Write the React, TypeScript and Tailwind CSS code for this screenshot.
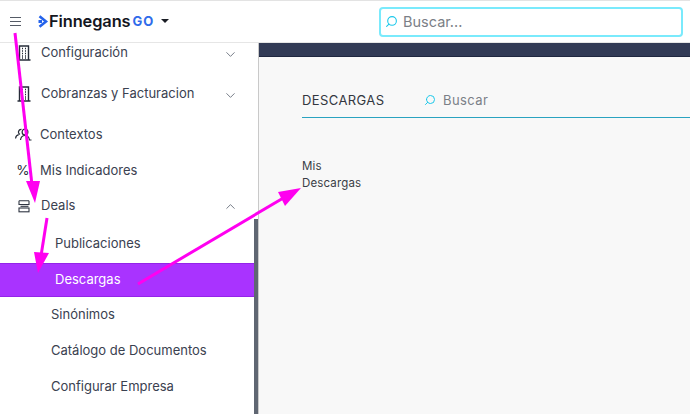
import { ChevronDown, ChevronUp, Search } from "lucide-react";

const font = { fontFamily: "Inter, 'Open Sans', sans-serif" };

function Building() {
  return (
    <svg width="14" height="16" viewBox="0 0 14 16" fill="none" stroke="#262c38" strokeWidth="1.4">
      <path d="M2.500 15V1h9v14M0.500 15h13" />
      <path d="M5 3.500h1M8 3.500h1M5 6h1M8 6h1M5 8.500h1M8 8.500h1M5 11h1M8 11h1M5 13h1M8 13h1" strokeWidth="1.5" />
    </svg>
  );
}

function People() {
  return (
    <svg width="17" height="13" viewBox="0 0 17 13" fill="none" stroke="#262c38" strokeWidth="1.2">
      <circle cx="10" cy="4" r="2.900" />
      <path d="M5.500 12c.4-3 2-4.500 4.500-4.500s4 1.500 4.500 4.500h2" />
      <path d="M6.500 1.300A2.700 2.700 0 0 0 5 6.400M0.500 10.500c.3-2 1.500-3.500 3.300-3.800" />
    </svg>
  );
}

function Stack() {
  return (
    <svg width="12" height="13" viewBox="0 0 12 13" fill="none" stroke="#2f3542" strokeWidth="1.1">
      <path d="M1 0.800h10M1 0.800v3.700h10V0.800" />
      <rect x="1" y="8" width="10" height="3.800" />
      <path d="M2.500 6.300h8" />
    </svg>
  );
}

function Logo() {
  return (
    <svg width="11" height="13" viewBox="0 0 11 13" fill="none">
      <path d="M1.500 1.200L8 6.500 1.500 11.800" stroke="#2563eb" strokeWidth="2.600" />
      <path d="M0.500 5h3.500v3H0.500z" fill="#2563eb" />
    </svg>
  );
}

function Row({ h, icon, text, pl, chevron, active }: { h: string; icon?: React.ReactNode; text: string; pl: string; chevron?: "up" | "down"; active?: boolean }) {
  return (
    <div
      className={`flex items-center ${h} ${pl} pr-[16px] ${active ? "border-y border-[#9324e8] bg-[#a933ff] text-white" : "text-[#3a4150]"}`}
    >
      {icon && <span className="flex w-[26px] shrink-0 justify-center pr-2">{icon}</span>}
      <span className="flex-1 text-[13px]">{text}</span>
      {chevron === "down" && <ChevronDown size={15} strokeWidth={1.2} className="mt-[3px] text-[#4a5160]" />}
      {chevron === "up" && <ChevronUp size={15} strokeWidth={1.2} className="text-[#4a5160]" />}
    </div>
  );
}

export default function App() {
  return (
    <div style={font} className="relative flex h-[414px] w-[690px] flex-col overflow-hidden border-t border-[#e3e3e3] bg-white">
      {/* Header */}
      <header className="flex h-[42px] shrink-0 items-center border-b border-[#e6e6e6] pl-[10px] pr-[7px]">
        <div className="flex w-[11px] flex-col gap-[3px]">
          <div className="h-px bg-[#555b66]" />
          <div className="h-px bg-[#555b66]" />
          <div className="h-px bg-[#555b66]" />
        </div>
        <div className="ml-[17px] flex items-center">
          <Logo />
          <span className="text-[16.4px] font-semibold tracking-[-0.1px] text-[#14171f]">Finnegans</span>
          <span className="ml-[2px] text-[13px] font-bold tracking-[1px] text-[#2f6bea]">GO</span>
          <span className="ml-[7px] h-0 w-0 border-x-[4px] border-t-[4px] border-x-transparent border-t-[#1a1d24]" />
        </div>
        <div className="ml-auto flex h-[30px] w-[304px] items-center rounded-[4px] border-2 border-[#7aeafc] pl-[4px]">
          <Search size={13} strokeWidth={2} className="-scale-x-100 text-[#1cc8ea]" />
          <span className="ml-[5px] text-[14.5px] text-[#7b7f87]">Buscar...</span>
        </div>
      </header>

      <div className="flex min-h-0 flex-1">
        {/* Sidebar */}
        <aside className="relative w-[258px] shrink-0 overflow-hidden">
          <div className="-mt-[11px] flex flex-col pr-[4px]">
            <Row h="h-[41px]" pl="pl-[15px]" icon={<Building />} text="Configuración" chevron="down" />
            <Row h="h-[41px]" pl="pl-[15px]" icon={<Building />} text="Cobranzas y Facturacion" chevron="down" />
            <Row h="h-[41px]" pl="pl-[14px]" icon={<People />} text="Contextos" />
            <Row h="h-[31px]" pl="pl-[14px]" icon={<span className="text-[13.5px] text-[#262c38]">%</span>} text="Mis Indicadores" />
            <Row h="h-[38px] pt-[2px]" pl="pl-[15px]" icon={<Stack />} text="Deals" chevron="up" />
            <Row h="h-[39px]" pl="pl-[55px]" text="Publicaciones" />
            <Row h="h-[34px]" pl="pl-[55px]" text="Descargas" active />
            <Row h="h-[35px]" pl="pl-[51px]" text="Sinónimos" />
            <Row h="h-[37px]" pl="pl-[51px]" text="Catálogo de Documentos" />
            <Row h="h-[35px]" pl="pl-[51px]" text="Configurar Empresa" />
          </div>
          <div className="absolute bottom-0 right-0 top-[176px] w-[4px] bg-[#5f6672]" />
        </aside>

        {/* Main */}
        <main className="flex flex-1 flex-col border-l border-[#c9c9c9] bg-[#f8f8f8]">
          <div className="h-[14px] shrink-0 border-b border-[#1f2740] bg-[#323b56]" />
          <div className="pl-[43px]">
            <div className="mt-[29px] flex h-[32px] items-center border-b border-[#2aa3c0] pb-[1px]">
              <span className="w-[122px] text-[13px] tracking-[0.4px] text-[#33373f]">DESCARGAS</span>
              <Search size={12} strokeWidth={2} className="-mt-[3px] -scale-x-100 text-[#1cc8ea]" />
              <span className="ml-[7px] text-[13px] tracking-[0.4px] text-[#7b7f87]">Buscar</span>
            </div>
            <div className="mt-[40px] text-[11.5px] leading-[17px] tracking-[0.15px] text-[#3a3e46]">
              <div>Mis</div>
              <div>Descargas</div>
            </div>
          </div>
        </main>
      </div>

      {/* Annotation arrows */}
      <svg className="pointer-events-none absolute left-0 top-[-1px]" width="690" height="414" fill="#ff00f0" stroke="none">
        <path d="M15 33L32 185" stroke="#ff00f0" strokeWidth="3" fill="none" />
        <path d="M26 181L40 181L35 203Z" />
        <path d="M47 218L41 256" stroke="#ff00f0" strokeWidth="3" fill="none" />
        <path d="M34 252L49 253L38 273Z" />
        <path d="M138 284L285 197" stroke="#ff00f0" strokeWidth="3" fill="none" />
        <path d="M278 192L285 206L301 188Z" />
      </svg>
    </div>
  );
}
